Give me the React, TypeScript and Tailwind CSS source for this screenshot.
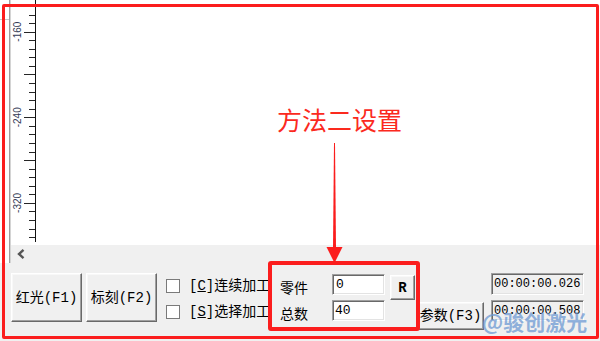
import React from "react";

const RED = "#fb1d1d";

function WinButton({
  children,
  className,
}: {
  children: React.ReactNode;
  className: string;
}) {
  return (
    <div
      className={
        "flex items-center justify-center bg-[#f0f0f0] border border-t-white border-l-white border-r-[#696969] border-b-[#696969] shadow-[inset_-1px_-1px_0_#a0a0a0,inset_1px_1px_0_#f8f8f8] text-[14px] text-black leading-none " +
        className
      }
    >
      {children}
    </div>
  );
}

function Sunken({
  children,
  className,
}: {
  children?: React.ReactNode;
  className: string;
}) {
  return (
    <div
      className={
        "flex items-center border border-t-[#a0a0a0] border-l-[#a0a0a0] border-r-white border-b-white shadow-[inset_1px_1px_0_#696969,inset_-1px_-1px_0_#e3e3e3] leading-none " +
        className
      }
    >
      {children}
    </div>
  );
}

function Check() {
  return (
    <div className="w-[14px] h-[14px] bg-white border border-[#7a7a7a] shrink-0" />
  );
}

export default function App() {
  const ticks: React.ReactNode[] = [];
  const labels: React.ReactNode[] = [];
  for (let k = 0; k < 30; k++) {
    const y = 6 + 8.56 * k;
    if (y > 242) break;
    const yy = Math.round(y) + 0.5;
    const long = (k - 3) % 5 === 0;
    ticks.push(
      <line
        key={k}
        x1={long ? 13 : 18}
        x2={24}
        y1={yy}
        y2={yy}
        stroke="#262626"
        strokeWidth={1}
      />
    );
  }
  const labelData = [
    { t: "-160", y: 31.7 },
    { t: "-240", y: 117.3 },
    { t: "-320", y: 202.9 },
  ];
  labelData.forEach((l) =>
    labels.push(
      <text
        key={l.t}
        x={0}
        y={0}
        transform={`translate(10 ${l.y}) rotate(-90)`}
        textAnchor="middle"
        fontSize={10}
        fontFamily="Liberation Sans, Arial, sans-serif"
        fill="#333a55"
      >
        {l.t}
      </text>
    )
  );

  return (
    <div className="relative w-[600px] h-[341px] overflow-hidden bg-[#f0f0f0] font-['Liberation_Mono','Noto_Sans_CJK_SC',monospace] text-black">
      {/* top: canvas + scrollbar */}
      <div className="flex h-[263px]">
        <div className="w-[9px] h-full bg-white flex flex-col">
          <div className="h-[19px]" />
          <div className="h-px bg-[#c8c8c8]" />
        </div>
        <div className="w-[2px] h-full bg-[#a0a0a0] border-r border-[#d4d4d4]" />
        <div className="flex-1 flex flex-col">
          <div className="h-[245px] bg-white">
            <svg width="26" height="245" className="block">
              <line x1={24.5} x2={24.5} y1={0} y2={242} stroke="#111" strokeWidth={1} />
              {ticks}
              {labels}
            </svg>
          </div>
          <div className="h-[18px] bg-[#f0f0f0] flex items-center pl-[5px]">
            <svg width="10" height="12" viewBox="0 0 10 12">
              <polyline
                points="7.5,1.8 3,6 7.5,10.2"
                fill="none"
                stroke="#555"
                strokeWidth={2.4}
              />
            </svg>
          </div>
        </div>
      </div>

      {/* bottom controls */}
      <div className="flex items-start pl-[11px] pt-[10px]">
        <WinButton className="w-[71px] h-[49px]">红光(F1)</WinButton>
        <WinButton className="w-[71px] h-[49px] ml-[4px]">标刻(F2)</WinButton>
        <div className="w-[104px] ml-[9px] pt-[6px] flex flex-col gap-[12px] overflow-hidden">
          <div className="flex items-center h-[14px] whitespace-nowrap">
            <Check />
            <span className="ml-[9px] text-[14px] leading-none">
              [<span className="underline">C</span>]连续加工
            </span>
          </div>
          <div className="flex items-center h-[14px] whitespace-nowrap">
            <Check />
            <span className="ml-[9px] text-[14px] leading-none">
              [<span className="underline">S</span>]选择加工
            </span>
          </div>
        </div>
        <div className="w-[52px] ml-[10px] flex flex-col font-['Noto_Sans_CJK_SC',sans-serif] text-[14px] leading-none">
          <div className="h-[26px] flex items-center pt-[2px]">零件</div>
          <div className="h-[26px] flex items-center pt-[2px]">总数</div>
        </div>
        <div className="w-[53px] flex flex-col gap-[5px] mt-[1px]">
          <Sunken className="h-[21px] bg-white pl-[3px] text-[13px]">0</Sunken>
          <Sunken className="h-[21px] bg-white pl-[2px] text-[13px]">40</Sunken>
        </div>
        <WinButton className="w-[25px] h-[25px] ml-[5px] mt-[2px] text-[13px] font-['Liberation_Mono',monospace] font-semibold">
          R
        </WinButton>
        <WinButton className="w-[67px] h-[28px] ml-[2px] mt-[29px]">参数(F3)</WinButton>
        <div className="w-[93px] ml-[7px] flex flex-col gap-[5px]">
          <Sunken className="h-[22px] bg-[#f0f0f0] pl-[2px] text-[12px]">00:00:00.026</Sunken>
          <Sunken className="h-[21px] bg-[#f0f0f0] pl-[2px] text-[12px]">00:00:00.508</Sunken>
        </div>
      </div>

      {/* annotation overlays */}
      <div className="absolute left-[2px] top-[4px] w-[597px] h-[335px] border-[3px] border-[#fb1d1d] rounded-[2px] pointer-events-none" />
      <div className="absolute left-[268px] top-[261px] w-[152px] h-[70px] border-4 border-[#fb1d1d] rounded-[3px] pointer-events-none" />
      <div className="absolute left-[277px] top-[104px] text-[25px] leading-[30px] text-[#fb2a1e] font-['Noto_Sans_CJK_SC',sans-serif] whitespace-nowrap">
        方法二设置
      </div>
      <svg
        className="absolute left-[324px] top-[143px]"
        width="21"
        height="121"
        viewBox="0 0 21 121"
      >
        <polygon points="10,0 11,0 12,105 9,105" fill={RED} />
        <polygon points="2.5,104 18.5,104 10.5,120" fill={RED} />
      </svg>
      <div className="absolute left-[482px] top-[306px] text-[21px] leading-[30px] font-bold text-[rgba(105,150,210,0.72)] font-['Noto_Sans_CJK_SC',sans-serif] whitespace-nowrap">
        @骏创激光
      </div>
    </div>
  );
}
